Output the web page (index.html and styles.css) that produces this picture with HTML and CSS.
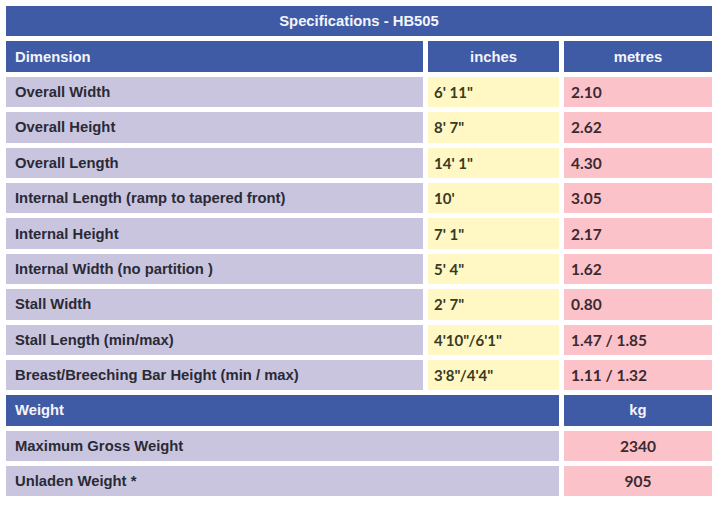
FILE: index.html
```html
<!DOCTYPE html>
<html>
<head>
<meta charset="utf-8">
<link rel="stylesheet" href="styles.css">
</head>
<body>
<div class="wrap">
<table class="spec">
  <colgroup>
    <col class="c1"><col class="c2"><col class="c3">
  </colgroup>
  <tr><th class="title" colspan="3">Specifications - HB505</th></tr>
  <tr class="head"><th class="left">Dimension</th><th>inches</th><th>metres</th></tr>
  <tr><td class="label">Overall Width</td><td class="in">6' 11"</td><td class="m">2.10</td></tr>
  <tr><td class="label">Overall Height</td><td class="in">8' 7"</td><td class="m">2.62</td></tr>
  <tr><td class="label">Overall Length</td><td class="in">14' 1"</td><td class="m">4.30</td></tr>
  <tr><td class="label">Internal Length (ramp to tapered front)</td><td class="in">10'</td><td class="m">3.05</td></tr>
  <tr><td class="label">Internal Height</td><td class="in">7' 1"</td><td class="m">2.17</td></tr>
  <tr><td class="label">Internal Width (no partition )</td><td class="in">5' 4"</td><td class="m">1.62</td></tr>
  <tr><td class="label">Stall Width</td><td class="in">2' 7"</td><td class="m">0.80</td></tr>
  <tr><td class="label">Stall Length (min/max)</td><td class="in">4'10"/6'1"</td><td class="m">1.47 / 1.85</td></tr>
  <tr><td class="label">Breast/Breeching Bar Height (min / max)</td><td class="in">3'8"/4'4"</td><td class="m">1.11 / 1.32</td></tr>
  <tr class="head"><th class="left" colspan="2">Weight</th><th>kg</th></tr>
  <tr><td class="label" colspan="2">Maximum Gross Weight</td><td class="m center">2340</td></tr>
  <tr><td class="label" colspan="2">Unladen Weight *</td><td class="m center">905</td></tr>
</table>
</div>
</body>
</html>
```
FILE: styles.css
```css
html, body {
  margin: 0;
  padding: 0;
  background: #ffffff;
}
.wrap {
  padding: 1px 0 0 1px;
}
.spec {
  border-collapse: separate;
  border-spacing: 5px;
  width: 715px;
  table-layout: fixed;
  font-family: "Liberation Sans", Arial, sans-serif;
  font-size: 14.8px;
  font-weight: bold;
}
.c1 { width: 417px; }
.c2 { width: 131px; }
.c3 { width: 148px; }
.spec th, .spec td {
  height: 30.4px;
  box-sizing: border-box;
  padding: 0;
  vertical-align: middle;
}
.spec th {
  background: #3f5ba5;
  color: #f4f4fb;
  text-align: center;
}
.spec th.left {
  text-align: left;
  padding-left: 9px;
}
.label {
  background: #c9c5de;
  color: #2a2a36;
  padding-left: 9px !important;
}
.in {
  background: #fff8c5;
  color: #3a3a22;
  font-family: Lato, "Open Sans", sans-serif;
  font-size: 15px;
  padding-left: 6px !important;
}
.m {
  background: #fcc2c9;
  color: #3a2a30;
  font-family: Lato, "Open Sans", sans-serif;
  font-size: 15.5px;
  padding-left: 7px !important;
}
.m.center {
  text-align: center;
  padding-left: 0 !important;
}
```
